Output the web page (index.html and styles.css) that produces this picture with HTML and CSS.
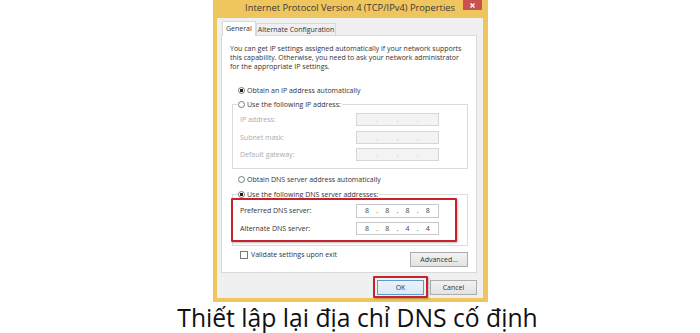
FILE: index.html
```html
<!DOCTYPE html>
<html lang="vi">
<head>
	<meta charset="UTF-8">
	<title>Thiết lập lại địa chỉ DNS cố định</title>
	<link rel="stylesheet" href="styles.css">
</head>
<body>

<div class="page">
	<div class="window">
		<div class="titlebar">
			<span class="title">Internet Protocol Version 4 (TCP/IPv4) Properties</span>
			<span class="close">
				<svg width="5" height="5" viewBox="0 0 5 5"><path d="M0.5 0.5L4.5 4.5M4.5 0.5L0.5 4.5" stroke="#fff" stroke-width="1.3"/></svg>
			</span>
		</div>

		<div class="body">
			<div class="tabs">
				<div class="tab active">General</div>
				<div class="tab">Alternate Configuration</div>
			</div>

			<div class="panel">
				<p class="intro">You can get IP settings assigned automatically if your network supports<br>this capability. Otherwise, you need to ask your network administrator<br>for the appropriate IP settings.</p>

				<div class="option first"><span class="radio on"></span>Obtain an IP address automatically</div>

				<fieldset class="group ip">
					<legend><span class="radio"></span>Use the following IP address:</legend>
					<div class="row">
						<span class="label">IP address:</span>
						<span class="ipbox"><i></i><b>.</b><i></i><b>.</b><i></i><b>.</b><i></i></span>
					</div>
					<div class="row">
						<span class="label">Subnet mask:</span>
						<span class="ipbox"><i></i><b>.</b><i></i><b>.</b><i></i><b>.</b><i></i></span>
					</div>
					<div class="row">
						<span class="label">Default gateway:</span>
						<span class="ipbox"><i></i><b>.</b><i></i><b>.</b><i></i><b>.</b><i></i></span>
					</div>
				</fieldset>

				<div class="option dns"><span class="radio"></span>Obtain DNS server address automatically</div>

				<fieldset class="group dnsgroup">
					<legend><span class="radio on"></span>Use the following DNS server addresses:</legend>
					<div class="row">
						<span class="label">Preferred DNS server:</span>
						<span class="ipbox"><i>8</i><b>.</b><i>8</i><b>.</b><i>8</i><b>.</b><i>8</i></span>
					</div>
					<div class="row">
						<span class="label">Alternate DNS server:</span>
						<span class="ipbox"><i>8</i><b>.</b><i>8</i><b>.</b><i>4</i><b>.</b><i>4</i></span>
					</div>
				</fieldset>

				<div class="checkrow">
					<label class="check"><span class="box"></span>Validate settings upon exit</label>
					<span class="btn advanced">Advanced...</span>
				</div>

				<div class="mark dnsmark"></div>
			</div>

			<div class="footer">
				<span class="okwrap">
					<span class="btn ok">OK</span>
					<span class="mark okmark"></span>
				</span>
				<span class="btn">Cancel</span>
			</div>
		</div>
	</div>

	<div class="caption">Thiết lập lại địa chỉ DNS cố định</div>
</div>

</body>
</html>
```

FILE: styles.css
```css
*{
	margin: 0;
	padding: 0;
	box-sizing: border-box;
}
body{
	background: #fff;
	font-family: "Open Sans", "Noto Sans", sans-serif;
}
.page{
	width: 700px;
	height: 333px;
	overflow: hidden;
	display: flex;
	flex-direction: column;
	align-items: center;
}

/* window frame */
.window{
	width: 275px;
	margin-left: 1px;
	background: #efc55e;
	padding: 0 5px 4px 4px;
}
.titlebar{
	height: 18px;
	display: grid;
	grid-template-columns: 1fr auto 1fr;
	align-items: start;
}
.title{
	grid-column: 2;
	font-size: 9.3px;
	line-height: 16px;
	color: #3a3a3a;
	white-space: nowrap;
}
.close{
	grid-column: 3;
	justify-self: end;
	margin-right: 1px;
	width: 19px;
	height: 10px;
	background: #c9514f;
	display: flex;
	align-items: center;
	justify-content: center;
}
.body{
	background: #f0f0f0;
	padding: 3px 6px 3px 4px;
	font-size: 7px;
	color: #333;
}

/* tabs */
.tabs{
	display: flex;
	align-items: flex-end;
	height: 14px;
	margin-left: 1px;
}
.tab{
	height: 12px;
	line-height: 11px;
	padding: 0 1px;
	border: 1px solid #d9d9d9;
	border-bottom: none;
	background: #f0f0f0;
	white-space: nowrap;
}
.tab.active{
	height: 15px;
	margin-bottom: -1px;
	padding: 0 3px;
	background: #fff;
	line-height: 13px;
	position: relative;
	z-index: 1;
}
.panel{
	position: relative;
	height: 238px;
	background: #fff;
	border: 1px solid #d9d9d9;
	padding: 7px 8px 0 8px;
}
.intro{
	line-height: 9px;
	white-space: nowrap;
	padding-top: 0.5px;
}

/* radios */
.option{
	display: flex;
	align-items: center;
	height: 9px;
	margin-left: 8px;
	white-space: nowrap;
}
.option.first{
	margin-top: 15px;
}
.option.dns{
	margin-top: 6px;
}
.radio{
	width: 7px;
	height: 7px;
	margin-right: 2px;
	border: 1px solid #7a7a7a;
	border-radius: 50%;
	background: #fff;
	flex: none;
}
.radio.on{
	background: radial-gradient(circle, #222 1.6px, #fff 2px);
}

/* group boxes */
.group{
	margin: 5px 0 0 2px;
	width: 236px;
	border: 1px solid #dcdcdc;
	padding: 0 28px 7px 7px;
}
.group legend{
	display: flex;
	align-items: center;
	height: 9px;
	margin-left: -2px;
	padding-right: 1px;
	white-space: nowrap;
}
.group.dnsgroup{
	margin-top: 6px;
	padding-bottom: 10px;
}
.row{
	display: flex;
	align-items: center;
	height: 13px;
	margin-top: 4.5px;
}
.dnsgroup .row{
	height: 13.5px;
	margin-top: 4px;
}
.dnsgroup .row:first-of-type{
	margin-top: 5px;
}
.label{
	width: 116px;
	flex: none;
	white-space: nowrap;
}
.ip .label{
	color: #ababab;
}
.ipbox{
	width: 83px;
	height: 100%;
	display: flex;
	align-items: center;
	border: 1px solid #c9c9c9;
	background: #fff;
	color: #444;
}
.ip .ipbox{
	background: #f3f3f3;
	border-color: #d6d6d6;
	color: #b5b5b5;
}
.ipbox i{
	flex: 1;
	font-style: normal;
	text-align: center;
}
.ipbox b{
	width: 0;
	display: flex;
	justify-content: center;
	font-weight: normal;
}

/* bottom of panel */
.checkrow{
	display: flex;
	justify-content: space-between;
	align-items: flex-start;
	margin-top: 4px;
	padding: 0 0 0 10px;
}
.check{
	display: flex;
	align-items: center;
	height: 9px;
	white-space: nowrap;
}
.box{
	width: 8px;
	height: 8px;
	margin-right: 3px;
	border: 1px solid #7a7a7a;
	background: #fff;
}
.btn{
	display: flex;
	align-items: center;
	justify-content: center;
	width: 47px;
	height: 15px;
	border: 1px solid #adadad;
	background: linear-gradient(#f2f2f2, #e3e3e3);
	color: #333;
}
.btn.advanced{
	width: 58px;
	margin-top: 2px;
}
.footer{
	display: flex;
	justify-content: flex-end;
	gap: 6px;
	padding-top: 7px;
}
.okwrap{
	position: relative;
}
.btn.ok{
	border-color: #5a9bd1;
	background: linear-gradient(#eaf3fb, #dce9f5);
}

/* red highlight marks drawn over the dialog */
.mark{
	position: absolute;
	border: 2.5px solid #c7232b;
	border-radius: 1px;
	box-shadow: 1px 1px 2px rgba(0, 0, 0, 0.25);
}
.dnsmark{
	left: 9px;
	top: 162px;
	width: 226px;
	height: 44px;
}
.okmark{
	left: -4px;
	right: -4px;
	top: -4px;
	bottom: -3px;
}

.caption{
	margin-left: 15px;
	font-size: 24.7px;
	line-height: 31px;
	color: #111;
	white-space: nowrap;
}
```
